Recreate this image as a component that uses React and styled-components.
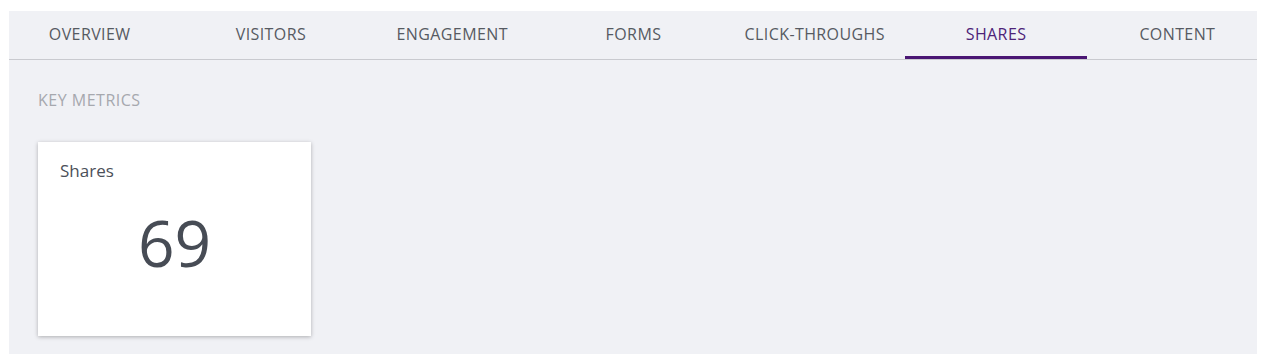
import React from 'react'
import styled, { createGlobalStyle } from 'styled-components';

const GlobalStyle = createGlobalStyle`
    html, body {
        margin: 0;
        padding: 0;
        background: #ffffff;
        font-family: "Open Sans", "Noto Sans", "Liberation Sans", sans-serif;
    }
`

const Panel = styled.div`
    margin: 11px 9px 8px 9px;
    background: #f0f1f5;
    overflow: hidden;
`

const TabList = styled.nav`
    display: grid;
    grid-template-columns: repeat(7, 1fr);
    margin: 0 -11px 0 -10px;
    border-bottom: 1px solid #c9cacf;
`

const Tab = styled.div`
    height: 48px;
    box-sizing: border-box;
    padding-bottom: 3px;
    display: flex;
    align-items: center;
    justify-content: center;
    position: relative;
    font-size: 16px;
    line-height: 22px;
    letter-spacing: 0.4px;
    color: ${props => props.active ? '#4d2379' : '#565a62'};
    cursor: pointer;

    &::after {
        content: '';
        position: absolute;
        left: 0;
        right: 0;
        bottom: 0;
        height: 3px;
        background: ${props => props.active ? '#4a1673' : 'transparent'};
    }
`

const Section = styled.section`
    padding: 30px 29px 18px 29px;
`

const SectionTitle = styled.h3`
    margin: 0 0 32px 0;
    font-size: 16px;
    line-height: 20px;
    font-weight: 400;
    letter-spacing: 0.5px;
    color: #a6a8ae;
`

const Cards = styled.div`
    display: flex;
    gap: 24px;
`

const MetricCard = styled.div`
    width: 273px;
    height: 194px;
    box-sizing: border-box;
    padding: 18px 22px;
    background: #ffffff;
    box-shadow: 0 1px 4px rgba(0, 0, 0, 0.28);
    display: flex;
    flex-direction: column;
`

const MetricLabel = styled.div`
    font-size: 17px;
    line-height: 22px;
    color: #4b5059;
`

const MetricValue = styled.div`
    margin-top: 29px;
    font-size: 64px;
    line-height: 64px;
    text-align: center;
    color: #474c55;
`

const tabs = ['OVERVIEW', 'VISITORS', 'ENGAGEMENT', 'FORMS', 'CLICK-THROUGHS', 'SHARES', 'CONTENT'];

const App = () => {
    const [active, setActive] = React.useState('SHARES');
    return (
        <>
            <GlobalStyle />
            <Panel>
                <TabList>
                    {tabs.map(t => (
                        <Tab key={t} active={t === active ? 1 : 0} onClick={() => setActive(t)}>{t}</Tab>
                    ))}
                </TabList>
                <Section>
                    <SectionTitle>KEY METRICS</SectionTitle>
                    <Cards>
                        <MetricCard>
                            <MetricLabel>Shares</MetricLabel>
                            <MetricValue>69</MetricValue>
                        </MetricCard>
                    </Cards>
                </Section>
            </Panel>
        </>
    )
}

export default App
